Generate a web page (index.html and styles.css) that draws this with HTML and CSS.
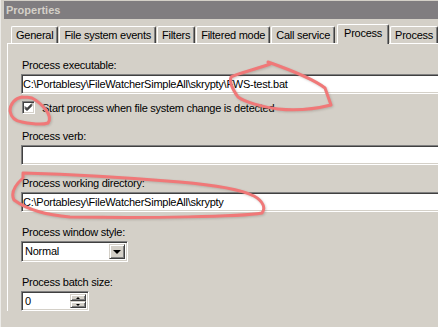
FILE: index.html
```html
<!DOCTYPE html>
<html lang="en">

<head>
    <meta charset="UTF-8">
    <meta name="viewport" content="width=device-width, initial-scale=1.0">
    <title>Properties</title>
    <link rel="stylesheet" href="styles.css">
</head>

<body>
    <div class="window">
        <div class="title-bar">Properties</div>

        <div class="tabs">
            <div class="tab">General</div>
            <div class="tab">File system events</div>
            <div class="tab">Filters</div>
            <div class="tab">Filtered mode</div>
            <div class="tab">Call service</div>
            <div class="tab active">Process</div>
            <div class="tab">Process</div>
        </div>

        <div class="tab-panel">
            <div class="field field-first">
                <div class="field-label">Process executable:</div>
                <div class="text-box">C:\Portablesy\FileWatcherSimpleAll\skrypty\FWS-test.bat</div>
            </div>

            <div class="check-row">
                <div class="check-box">
                    <svg width="9" height="9" viewBox="0 0 9 9">
                        <path d="M1 3.5 L3 5.5 L8 0.5 M1 4.5 L3 6.5 L8 1.5 M1 5.5 L3 7.5 L8 2.5" stroke="#000" stroke-width="1" fill="none" />
                    </svg>
                </div>
                <span>Start process when file system change is detected</span>
            </div>

            <div class="field field-verb">
                <div class="field-label">Process verb:</div>
                <div class="text-box"></div>
            </div>

            <div class="field field-dir">
                <div class="field-label">Process working directory:</div>
                <div class="text-box">C:\Portablesy\FileWatcherSimpleAll\skrypty</div>
            </div>

            <div class="field field-style">
                <div class="field-label">Process window style:</div>
                <div class="combo">
                    <span class="combo-value">Normal</span>
                    <div class="combo-btn"><span class="arrow-down"></span></div>
                </div>
            </div>

            <div class="field field-batch">
                <div class="field-label">Process batch size:</div>
                <div class="spin">
                    <span class="spin-value">0</span>
                    <div class="spin-btns">
                        <div class="spin-btn"><span class="arrow-small-up"></span></div>
                        <div class="spin-btn"><span class="arrow-small-down"></span></div>
                    </div>
                </div>
            </div>
        </div>

        <!-- hand drawn marks over the screenshot -->
        <svg class="annotations" width="438" height="327" viewBox="0 0 438 327">
            <g fill="none" stroke="#f07878" stroke-width="3" stroke-linecap="round" stroke-linejoin="round">
                <path d="M268 62 C285 68 312 78 325 88 L331 105 C315 109 296 111 278 109 C262 107 245 102 238 97 C233 90 229 82 231 77 C238 73 254 70 270 64" />
                <path d="M22 97 C15 98 10 104 10 111 C11 117 15 121 22 122 C32 124 42 125 48 123 C51 119 49 114 46 110 C42 105 38 101 32 98 C28 97 25 97 22 97" />
                <path d="M23 173 C60 174 120 177 180 182 C215 185 240 189 254 196 C263 201 266 208 262 213 C240 217 150 218 70 217 C45 215 25 208 14 200 C11 194 14 186 23 178 L23 173" />
            </g>
        </svg>
    </div>
</body>

</html>
```

FILE: styles.css
```css
* {
    margin: 0;
    padding: 0;
    box-sizing: border-box;
}

body {
    background-color: #d4d0c8;
    font-family: "Liberation Sans", Arial, sans-serif;
    font-size: 11px;
    letter-spacing: -0.25px;
    color: #000;
    overflow: hidden;
}

.window {
    position: relative;
    height: 327px;
    border-left: 1px solid #ecebe8;
    overflow: hidden;
}

.title-bar {
    margin: 1px 0 0 3px;
    height: 18px;
    line-height: 18px;
    padding-left: 2px;
    background-color: #807d80;
    color: #d4d0c8;
    font-weight: bold;
    font-size: 11px;
    letter-spacing: 0;
}

.tabs {
    display: flex;
    align-items: flex-end;
    gap: 1px;
    height: 19px;
    margin: 5px 0 0 10px;
    position: relative;
    z-index: 1;
    white-space: nowrap;
}

.tab {
    height: 17px;
    line-height: 16px;
    padding: 0 4px;
    border-top: 1px solid #fff;
    border-left: 1px solid #fff;
    border-right: 1px solid #404040;
    border-radius: 2px 2px 0 0;
    box-shadow: inset -1px 0 #808080;
    background-color: #d4d0c8;
    flex-shrink: 0;
}

.tab.active {
    height: 20px;
    line-height: 16px;
    margin: 0 0 -1px 1px;
    padding: 0 6px;
}

.tab-panel {
    margin-left: 6px;
    border-top: 1px solid #fff;
    border-left: 1px solid #fff;
    padding: 15px 0 0 13px;
}

.field-label {
    height: 13px;
    line-height: 13px;
    margin-bottom: 2px;
    padding-left: 1px;
}

.field-verb {
    margin-top: 16px;
}

.field-dir {
    margin-top: 12px;
}

.field-style {
    margin-top: 14px;
}

.field-batch {
    margin-top: 14px;
}

.text-box {
    width: 440px;
    height: 20px;
    line-height: 16px;
    padding-left: 1px;
    background-color: #fff;
    border-top: 1px solid #808080;
    border-left: 1px solid #808080;
    border-bottom: 1px solid #fff;
    border-right: 1px solid #fff;
    box-shadow: inset 1px 1px #404040, inset -1px -1px #d4d0c8;
    padding-top: 1px;
    white-space: nowrap;
}

.check-row {
    display: flex;
    align-items: center;
    gap: 7px;
    margin-top: 7px;
    height: 13px;
    padding-left: 1px;
}

.check-box {
    width: 13px;
    height: 13px;
    background-color: #fff;
    border-top: 1px solid #808080;
    border-left: 1px solid #808080;
    border-bottom: 1px solid #fff;
    border-right: 1px solid #fff;
    box-shadow: inset 1px 1px #404040, inset -1px -1px #d4d0c8;
    display: flex;
    align-items: center;
    justify-content: center;
}

.check-box svg {
    display: block;
    margin: -1px 0 0 0;
}

.combo,
.spin {
    display: flex;
    align-items: stretch;
    justify-content: space-between;
    background-color: #fff;
    border-top: 1px solid #808080;
    border-left: 1px solid #808080;
    border-bottom: 1px solid #fff;
    border-right: 1px solid #fff;
    box-shadow: inset 1px 1px #404040, inset -1px -1px #d4d0c8;
    padding: 2px;
}

.combo {
    width: 107px;
    height: 21px;
}

.combo-value,
.spin-value {
    line-height: 15px;
    padding-left: 1px;
}

.combo-btn,
.spin-btn {
    background-color: #d4d0c8;
    border-top: 1px solid #d4d0c8;
    border-left: 1px solid #d4d0c8;
    border-bottom: 1px solid #404040;
    border-right: 1px solid #404040;
    box-shadow: inset 1px 1px #fff, inset -1px -1px #808080;
    display: flex;
    align-items: center;
    justify-content: center;
}

.combo-btn {
    width: 16px;
}

.arrow-down {
    width: 0;
    height: 0;
    border-left: 4px solid transparent;
    border-right: 4px solid transparent;
    border-top: 4px solid #000;
    margin-top: 1px;
}

.spin {
    width: 68px;
    height: 20px;
}

.spin-btns {
    display: flex;
    flex-direction: column;
    width: 16px;
}

.spin-btn {
    flex: 1;
}

.arrow-small-up,
.arrow-small-down {
    width: 0;
    height: 0;
    border-left: 2px solid transparent;
    border-right: 2px solid transparent;
}

.arrow-small-up {
    border-bottom: 2px solid #000;
}

.arrow-small-down {
    border-top: 2px solid #000;
}

.annotations {
    position: absolute;
    top: 0;
    left: -1px;
    pointer-events: none;
    filter: drop-shadow(1px 1px 1px rgba(120, 110, 100, 0.35));
}
```
